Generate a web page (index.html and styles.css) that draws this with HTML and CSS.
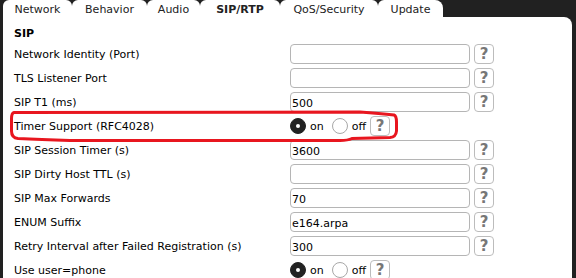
FILE: index.html
```html
<!DOCTYPE html>
<html>
<head>
<meta charset="utf-8">
<link rel="stylesheet" href="styles.css">
</head>
<body>
<div class="tabs">
  <div class="tab tab-network">Network</div>
  <div class="tab tab-behavior">Behavior</div>
  <div class="tab tab-audio">Audio</div>
  <div class="tab tab-sip active">SIP/RTP</div>
  <div class="tab tab-qos">QoS/Security</div>
  <div class="tab tab-update">Update</div>
</div>
<div class="panel">
  <div class="section-title">SIP</div>
  <div class="rows">
    <div class="row"><span class="label">Network Identity (Port)</span><input class="field" value=""><span class="help">?</span></div>
    <div class="row"><span class="label">TLS Listener Port</span><input class="field" value=""><span class="help">?</span></div>
    <div class="row"><span class="label">SIP T1 (ms)</span><input class="field" value="500"><span class="help">?</span></div>
    <div class="row"><span class="label">Timer Support (RFC4028)</span>
      <div class="radios"><span class="radio checked"></span><span class="rlabel">on</span><span class="radio"></span><span class="rlabel last">off</span><span class="help">?</span></div>
    </div>
    <div class="row"><span class="label">SIP Session Timer (s)</span><input class="field" value="3600"><span class="help">?</span></div>
    <div class="row"><span class="label">SIP Dirty Host TTL (s)</span><input class="field" value=""><span class="help">?</span></div>
    <div class="row"><span class="label">SIP Max Forwards</span><input class="field" value="70"><span class="help">?</span></div>
    <div class="row"><span class="label">ENUM Suffix</span><input class="field" value="e164.arpa"><span class="help">?</span></div>
    <div class="row"><span class="label">Retry Interval after Failed Registration (s)</span><input class="field" value="300"><span class="help">?</span></div>
    <div class="row"><span class="label">Use user=phone</span>
      <div class="radios"><span class="radio checked"></span><span class="rlabel">on</span><span class="radio"></span><span class="rlabel last">off</span><span class="help">?</span></div>
    </div>
  </div>
</div>
<svg class="highlight" width="576" height="278" viewBox="0 0 576 278">
  <path d="M 14 112.5 L 360 112 Q 380 113.5 394 115 Q 396.5 116 396.5 122 L 396.5 131 Q 396 137 390 137.5 L 352 138.5 Q 348 140.5 340 140.5 L 70 140.5 Q 40 139.5 18 138.5 Q 11.5 138 11.5 131 L 11.5 119 Q 11.5 113 14 112.5 Z" fill="none" stroke="#e8161f" stroke-width="3"/>
</svg>
</body>
</html>
```
FILE: styles.css
```css
html, body {
  margin: 0;
  padding: 0;
  overflow: hidden;
}
body {
  background: #212121;
  font-family: "DejaVu Sans", Verdana, sans-serif;
  font-size: 11px;
  color: #000;
  position: relative;
  width: 576px;
  height: 278px;
}
.tabs {
  display: flex;
  padding-left: 3px;
  height: 17px;
}
.tab {
  background: #fff;
  border-radius: 6px 6px 0 0;
  text-align: center;
  color: #222;
  padding-top: 3px;
  line-height: 14px;
  box-sizing: border-box;
  height: 17px;
}
.tab.active { font-weight: bold; }
.tab-network { width: 69px; }
.tab-behavior { width: 75px; }
.tab-audio { width: 53px; }
.tab-sip { width: 80px; }
.tab-qos { width: 98px; }
.tab-update { width: 65px; border-top-right-radius: 8px; }
.panel {
  background: #fff;
  margin: 0 4px 0 3px;
  border-top-right-radius: 8px;
  padding: 8px 0 0 11px;
  box-sizing: border-box;
  height: 261px;
  overflow: hidden;
}
.section-title {
  font-weight: bold;
  line-height: 18px;
  height: 18px;
  margin-bottom: 1px;
}
.rows {
  display: flex;
  flex-direction: column;
  gap: 4px;
}
.row {
  display: grid;
  grid-template-columns: 272px 180px 20px;
  column-gap: 4px;
  height: 20px;
  flex-shrink: 0;
}
.label {
  padding-top: 2px;
  line-height: 18px;
  white-space: nowrap;
}
.field {
  box-sizing: border-box;
  width: 180px;
  height: 20px;
  margin: 0;
  border: 1px solid #b5b5b5;
  border-radius: 4px;
  padding: 2px 1px 0 1px;
  font-family: "DejaVu Sans", Verdana, sans-serif;
  font-size: 11px;
  color: #000;
  background: #fff;
  outline: none;
}
.help {
  box-sizing: border-box;
  width: 20px;
  height: 20px;
  border: 1px solid #bcbcbc;
  border-radius: 4px;
  text-align: center;
  font-weight: bold;
  font-size: 15px;
  line-height: 18px;
  color: #777;
  background: #fff;
}
.radios {
  grid-column: 2 / span 2;
  display: flex;
  align-items: center;
}
.radio {
  box-sizing: border-box;
  width: 16px;
  height: 16px;
  border-radius: 50%;
  border: 1px solid #a8a8a8;
  background: #fff;
  margin-right: 4px;
  position: relative;
}
.radio.checked {
  background: #222;
  border-color: #222;
}
.radio.checked::after {
  content: "";
  position: absolute;
  left: 5px;
  top: 5px;
  width: 4px;
  height: 4px;
  border-radius: 50%;
  background: #fff;
}
.rlabel {
  padding-top: 2px;
  line-height: 18px;
  margin-right: 8px;
}
.rlabel.last { margin-right: 4px; }
.highlight {
  position: absolute;
  left: 0;
  top: 0;
  pointer-events: none;
}
```
